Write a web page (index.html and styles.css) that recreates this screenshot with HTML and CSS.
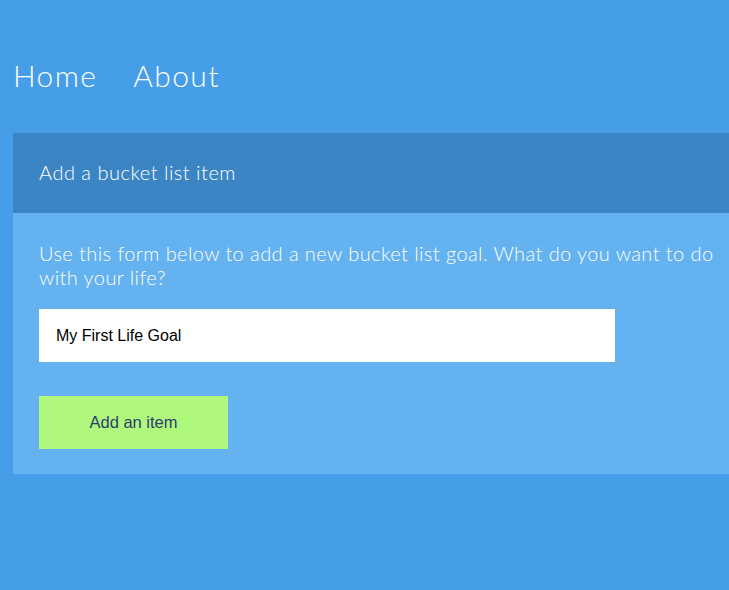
FILE: index.html
```html
<!DOCTYPE html>
<html>
<head>
<meta charset="utf-8">
<link rel="stylesheet" href="styles.css">
</head>
<body>
<div class="page">
  <nav class="nav">
    <a class="nav-link" href="#">Home</a>
    <a class="nav-link" href="#">About</a>
  </nav>
  <section class="card">
    <header class="card-header">Add a bucket list item</header>
    <div class="card-body">
      <p class="intro">Use this form below to add a new bucket list goal. What do you want to do with your life?</p>
      <input class="goal-input" type="text" value="My First Life Goal">
      <button class="add-btn">Add an item</button>
    </div>
  </section>
</div>
</body>
</html>
```
FILE: styles.css
```css
html, body {
  margin: 0;
  padding: 0;
  background: #469ee8;
  overflow: hidden;
  height: 100%;
}
.page {
  padding: 55px 0 0 13px;
  font-family: "Lato", "Open Sans", sans-serif;
  font-weight: 300;
  color: #fff;
}
.nav {
  display: flex;
  gap: 36px;
  height: 78px;
}
.nav-link {
  color: #fff;
  text-decoration: none;
  font-size: 30px;
  line-height: 40px;
  letter-spacing: 1.4px;
}
.card {
  width: 729px;
}
.card-header {
  background: #3c85c4;
  height: 80px;
  box-sizing: border-box;
  padding: 27px 26px 0;
  font-size: 20px;
  line-height: 24px;
  letter-spacing: 0.5px;
}
.card-body {
  background: #65b2f0;
  padding: 28px 26px 25px;
  display: flex;
  flex-direction: column;
  align-items: flex-start;
}
.intro {
  margin: 0 0 20px;
  font-size: 20px;
  line-height: 24px;
  letter-spacing: 0.42px;
}
.goal-input {
  width: 576px;
  height: 53px;
  box-sizing: border-box;
  border: none;
  outline: none;
  padding: 0 17px;
  font-family: "Liberation Sans", Arial, sans-serif;
  font-size: 16px;
  color: #000;
  background: #fff;
  margin: 0 0 34px;
}
.add-btn {
  width: 189px;
  height: 53px;
  border: none;
  background: #b0f77d;
  color: #2b3f6b;
  font-family: "Liberation Sans", Arial, sans-serif;
  font-size: 16.5px;
  padding: 0;
}
```
